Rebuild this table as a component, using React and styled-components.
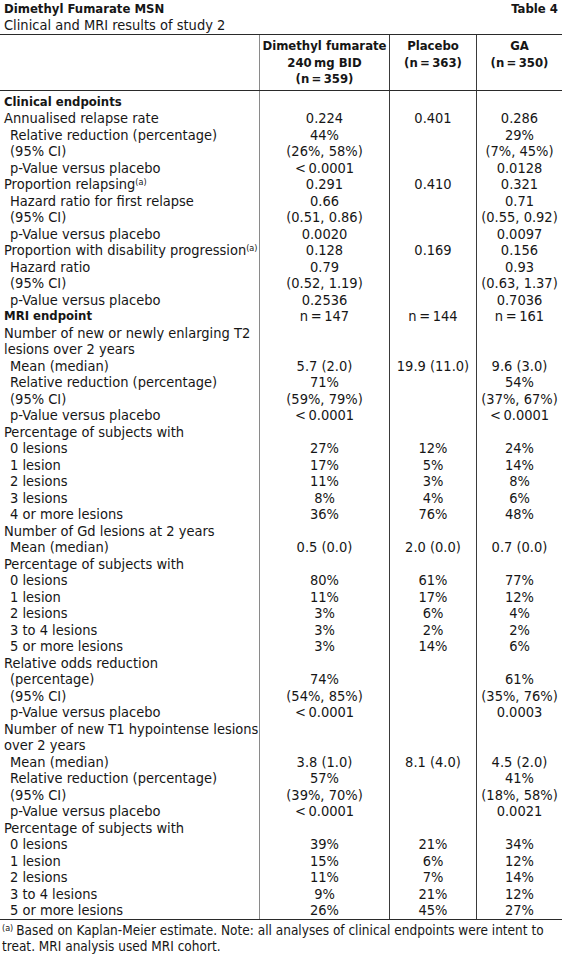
import styled, { createGlobalStyle } from 'styled-components';

const GlobalStyle = createGlobalStyle`
  html, body {
    margin: 0;
    padding: 0;
    background: #ffffff;
  }
  body {
    font-family: "Liberation Sans Narrow", "DejaVu Sans Condensed", "Liberation Sans", sans-serif;
    color: #161616;
  }
`;

const rows = [
  { label: 'Clinical endpoints', head: true },
  { label: 'Annualised relapse rate', v: ['0.224', '0.401', '0.286'] },
  { label: 'Relative reduction (percentage)', indent: true, v: ['44%', '', '29%'] },
  { label: '(95% CI)', indent: true, v: ['(26%, 58%)', '', '(7%, 45%)'] },
  { label: 'p-Value versus placebo', indent: true, v: ['<\u20090.0001', '', '0.0128'] },
  { label: 'Proportion relapsing', note: true, v: ['0.291', '0.410', '0.321'] },
  { label: 'Hazard ratio for first relapse', indent: true, v: ['0.66', '', '0.71'] },
  { label: '(95% CI)', indent: true, v: ['(0.51, 0.86)', '', '(0.55, 0.92)'] },
  { label: 'p-Value versus placebo', indent: true, v: ['0.0020', '', '0.0097'] },
  { label: 'Proportion with disability progression', note: true, v: ['0.128', '0.169', '0.156'] },
  { label: 'Hazard ratio', indent: true, v: ['0.79', '', '0.93'] },
  { label: '(95% CI)', indent: true, v: ['(0.52, 1.19)', '', '(0.63, 1.37)'] },
  { label: 'p-Value versus placebo', indent: true, v: ['0.2536', '', '0.7036'] },
  { label: 'MRI endpoint', head: true, v: ['n\u2009=\u2009147', 'n\u2009=\u2009144', 'n\u2009=\u2009161'] },
  { label: 'Number of new or newly enlarging T2' },
  { label: 'lesions over 2 years' },
  { label: 'Mean (median)', indent: true, v: ['5.7 (2.0)', '19.9 (11.0)', '9.6 (3.0)'] },
  { label: 'Relative reduction (percentage)', indent: true, v: ['71%', '', '54%'] },
  { label: '(95% CI)', indent: true, v: ['(59%, 79%)', '', '(37%, 67%)'] },
  { label: 'p-Value versus placebo', indent: true, v: ['<\u20090.0001', '', '<\u20090.0001'] },
  { label: 'Percentage of subjects with' },
  { label: '0 lesions', indent: true, v: ['27%', '12%', '24%'] },
  { label: '1 lesion', indent: true, v: ['17%', '5%', '14%'] },
  { label: '2 lesions', indent: true, v: ['11%', '3%', '8%'] },
  { label: '3 lesions', indent: true, v: ['8%', '4%', '6%'] },
  { label: '4 or more lesions', indent: true, v: ['36%', '76%', '48%'] },
  { label: 'Number of Gd lesions at 2 years' },
  { label: 'Mean (median)', indent: true, v: ['0.5 (0.0)', '2.0 (0.0)', '0.7 (0.0)'] },
  { label: 'Percentage of subjects with' },
  { label: '0 lesions', indent: true, v: ['80%', '61%', '77%'] },
  { label: '1 lesion', indent: true, v: ['11%', '17%', '12%'] },
  { label: '2 lesions', indent: true, v: ['3%', '6%', '4%'] },
  { label: '3 to 4 lesions', indent: true, v: ['3%', '2%', '2%'] },
  { label: '5 or more lesions', indent: true, v: ['3%', '14%', '6%'] },
  { label: 'Relative odds reduction' },
  { label: '(percentage)', indent: true, v: ['74%', '', '61%'] },
  { label: '(95% CI)', indent: true, v: ['(54%, 85%)', '', '(35%, 76%)'] },
  { label: 'p-Value versus placebo', indent: true, v: ['<\u20090.0001', '', '0.0003'] },
  { label: 'Number of new T1 hypointense lesions' },
  { label: 'over 2 years' },
  { label: 'Mean (median)', indent: true, v: ['3.8 (1.0)', '8.1 (4.0)', '4.5 (2.0)'] },
  { label: 'Relative reduction (percentage)', indent: true, v: ['57%', '', '41%'] },
  { label: '(95% CI)', indent: true, v: ['(39%, 70%)', '', '(18%, 58%)'] },
  { label: 'p-Value versus placebo', indent: true, v: ['<\u20090.0001', '', '0.0021'] },
  { label: 'Percentage of subjects with' },
  { label: '0 lesions', indent: true, v: ['39%', '21%', '34%'] },
  { label: '1 lesion', indent: true, v: ['15%', '6%', '12%'] },
  { label: '2 lesions', indent: true, v: ['11%', '7%', '14%'] },
  { label: '3 to 4 lesions', indent: true, v: ['9%', '21%', '12%'] },
  { label: '5 or more lesions', indent: true, v: ['26%', '45%', '27%'] },
];

export default function App() {
  return (
    <Page>
      <GlobalStyle />
      <TitleBar>
        <Title>Dimethyl Fumarate MSN</Title>
        <Title>Table 4</Title>
      </TitleBar>
      <Subtitle>Clinical and MRI results of study 2</Subtitle>
      <Table>
        <HeadRow>
          <HeadCell />
          <HeadCell divider="#8a8a8a">Dimethyl fumarate<br />240&thinsp;mg BID<br />(n&thinsp;=&thinsp;359)</HeadCell>
          <HeadCell divider="#3a3a3a">Placebo<br />(n&thinsp;=&thinsp;363)</HeadCell>
          <HeadCell divider="#3a3a3a">GA<br />(n&thinsp;=&thinsp;350)</HeadCell>
        </HeadRow>
        <Body>
          {rows.map((r, i) => (
            <Row key={i}>
              <Label indent={r.indent} head={r.head}>
                {r.label}
                {r.note && <Sup>(a)</Sup>}
              </Label>
              <Cell divider="#8a8a8a">{r.v ? r.v[0] : ''}</Cell>
              <Cell divider="#3a3a3a">{r.v ? r.v[1] : ''}</Cell>
              <Cell divider="#3a3a3a">{r.v ? r.v[2] : ''}</Cell>
            </Row>
          ))}
        </Body>
      </Table>
      <Footnote>
        <Sup>(a)</Sup>Based on Kaplan-Meier estimate. Note: all analyses of clinical endpoints were intent to treat. MRI analysis used MRI cohort.
      </Footnote>
    </Page>
  );
}

const Page = styled.div`
  width: 562px;
  font-size: 14.5px;
`;

const TitleBar = styled.div`
  display: flex;
  justify-content: space-between;
  padding: 1px 4px 0;
  line-height: 16px;
`;

const Title = styled.div`
  font-weight: bold;
  font-size: 13px;
`;

const Subtitle = styled.div`
  padding: 0 4px;
  line-height: 16px;
  margin-bottom: 1px;
`;

const Table = styled.div`
  border-top: 1px solid #2a2a2a;
  border-bottom: 1px solid #2a2a2a;
`;

const HeadRow = styled.div`
  display: grid;
  grid-template-columns: 259px 130px 87px 1fr;
  border-bottom: 1px solid #2a2a2a;
`;

const HeadCell = styled.div`
  font-weight: bold;
  font-size: 13px;
  line-height: 16.5px;
  text-align: center;
  padding: 3px 0 2px;
  border-left: ${p => (p.divider ? `1px solid ${p.divider}` : 'none')};
`;

const Body = styled.div`
  padding-top: 3px;
`;

const Row = styled.div`
  display: grid;
  grid-template-columns: 259px 130px 87px 1fr;
  line-height: 16.5px;
  height: 16.5px;
`;

const Label = styled.div`
  padding-left: ${p => (p.indent ? '10px' : '4px')};
  font-weight: ${p => (p.head ? 'bold' : 'normal')};
  font-size: ${p => (p.head ? '13px' : '14.5px')};
  white-space: nowrap;
`;

const Cell = styled.div`
  text-align: center;
  white-space: nowrap;
  border-left: 1px solid ${p => p.divider};
  margin-top: -3px;
  padding-top: 3px;
`;

const Sup = styled.sup`
  font-size: 9px;
  line-height: 0;
  vertical-align: 4px;
  margin-right: 3px;
`;

const Footnote = styled.div`
  padding: 2px 4px 0 2px;
  line-height: 16.5px;
  font-size: 13.5px;
`;
